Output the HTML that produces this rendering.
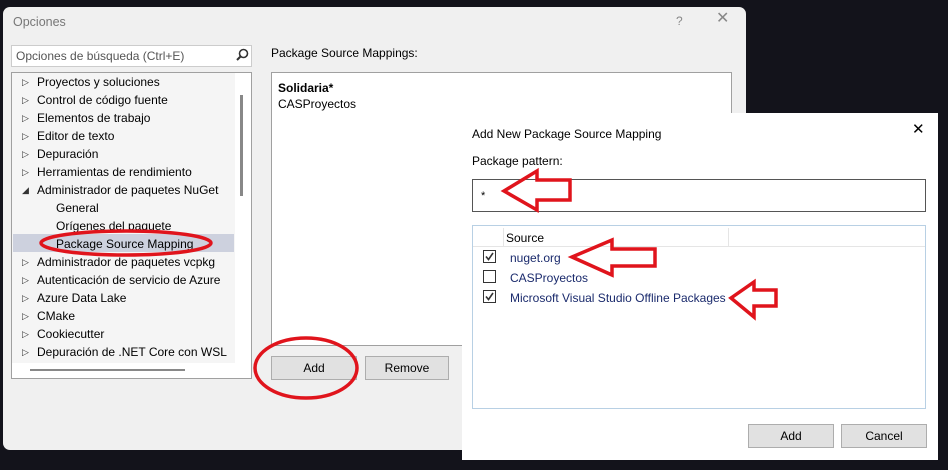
<!DOCTYPE html>
<html><head><meta charset="utf-8"><style>
*{margin:0;padding:0;box-sizing:border-box}
body{width:948px;height:470px;background:#13131b;position:relative;overflow:hidden;font-family:"Liberation Sans",sans-serif;font-size:12px;color:#000}
.a{position:absolute}
.main{left:3px;top:7px;width:743px;height:443px;background:#f0f0f0;border-radius:7px}
.t{white-space:nowrap;line-height:18px}
.btn{position:absolute;background:#e1e1e1;border:1px solid #adadad;text-align:center;line-height:22px}
</style></head><body>
<div class="a main"></div>
<div class="a t" style="left:13px;top:13px;color:#777;font-size:12.5px">Opciones</div>
<div class="a t" style="left:676px;top:12px;color:#888">?</div>
<div class="a t" style="left:716px;top:10px;color:#888;font-size:16px">✕</div>
<div class="a" style="left:11px;top:45px;width:241px;height:22px;background:#fff;border:1px solid #ccc"></div>
<div class="a t" style="left:16px;top:47px;color:#555">Opciones de búsqueda (Ctrl+E)</div>
<svg class="a" style="left:235px;top:48px" width="14" height="14"><circle cx="8.5" cy="5.5" r="4" fill="none" stroke="#333" stroke-width="1.6"/><line x1="6" y1="8" x2="2" y2="12" stroke="#333" stroke-width="2"/></svg>
<div class="a" style="left:11px;top:72px;width:241px;height:307px;background:#fff;border:1px solid #a0a0a0"></div>
<div class="a" style="left:12px;top:73px;width:223px;height:290px;background:#f5f5f5"></div>
<div class="a" style="left:240px;top:95px;width:3px;height:101px;background:#888"></div>
<div class="a" style="left:30px;top:369px;width:155px;height:2px;background:#888"></div>
<div class="a" style="left:13px;top:234px;width:221px;height:18px;background:#cdd1de"></div>
<div class="a" style="left:12px;top:73px">
<div class="a t" style="left:25px;top:0">Proyectos y soluciones</div>
<div class="a t" style="left:25px;top:18px">Control de código fuente</div>
<div class="a t" style="left:25px;top:36px">Elementos de trabajo</div>
<div class="a t" style="left:25px;top:54px">Editor de texto</div>
<div class="a t" style="left:25px;top:72px">Depuración</div>
<div class="a t" style="left:25px;top:90px">Herramientas de rendimiento</div>
<div class="a t" style="left:25px;top:108px">Administrador de paquetes NuGet</div>
<div class="a t" style="left:44px;top:126px">General</div>
<div class="a t" style="left:44px;top:144px">Orígenes del paquete</div>
<div class="a t" style="left:44px;top:162px">Package Source Mapping</div>
<div class="a t" style="left:25px;top:180px">Administrador de paquetes vcpkg</div>
<div class="a t" style="left:25px;top:198px">Autenticación de servicio de Azure</div>
<div class="a t" style="left:25px;top:216px">Azure Data Lake</div>
<div class="a t" style="left:25px;top:234px">CMake</div>
<div class="a t" style="left:25px;top:252px">Cookiecutter</div>
<div class="a t" style="left:25px;top:270px">Depuración de .NET Core con WSL</div>
</div>
<div class="a" style="left:22px;top:73px;font-size:9px;color:#333;line-height:18px">▷<br>▷<br>▷<br>▷<br>▷<br>▷<br>◢<br><br><br><br>▷<br>▷<br>▷<br>▷<br>▷<br>▷</div>
<div class="a t" style="left:271px;top:44px">Package Source Mappings:</div>
<div class="a" style="left:271px;top:72px;width:461px;height:274px;background:#fff;border:1px solid #a0a0a0"></div>
<div class="a t" style="left:278px;top:79px;font-weight:bold">Solidaria*</div>
<div class="a t" style="left:278px;top:95px">CASProyectos</div>
<div class="btn" style="left:271px;top:356px;width:86px;height:24px">Add</div>
<div class="btn" style="left:365px;top:356px;width:84px;height:24px">Remove</div>
<div class="a" style="left:462px;top:113px;width:476px;height:347px;background:#fff"></div>
<div class="a t" style="left:472px;top:125px">Add New Package Source Mapping</div>
<div class="a t" style="left:912px;top:121px;font-size:15px">✕</div>
<div class="a t" style="left:472px;top:152px">Package pattern:</div>
<div class="a" style="left:472px;top:179px;width:454px;height:33px;border:1px solid #555"></div>
<div class="a t" style="left:481px;top:187px;font-size:11px">*</div>
<div class="a" style="left:472px;top:225px;width:454px;height:184px;border:1px solid #b8d0e4"></div>
<div class="a" style="left:503px;top:228px;width:1px;height:19px;background:#e5e5e5"></div>
<div class="a" style="left:728px;top:228px;width:1px;height:19px;background:#e5e5e5"></div>
<div class="a" style="left:473px;top:246px;width:452px;height:1px;background:#e5e5e5"></div>
<div class="a t" style="left:506px;top:229px">Source</div>
<svg class="a" style="left:483px;top:250px" width="14" height="54" fill="none" stroke="#333">
<rect x="0.5" y="0.5" width="12" height="12"/><rect x="0.5" y="20.5" width="12" height="12"/><rect x="0.5" y="40.5" width="12" height="12"/>
<path d="M3 6.5 L5.5 9.5 L10 3" stroke-width="1.6"/><path d="M3 46.5 L5.5 49.5 L10 43" stroke-width="1.6"/>
</svg>
<div class="a t" style="left:510px;top:249px;color:#1a2a6c">nuget.org</div>
<div class="a t" style="left:510px;top:269px;color:#1a2a6c">CASProyectos</div>
<div class="a t" style="left:510px;top:289px;color:#1a2a6c">Microsoft Visual Studio Offline Packages</div>
<div class="btn" style="left:748px;top:424px;width:86px;height:24px">Add</div>
<div class="btn" style="left:841px;top:424px;width:86px;height:24px">Cancel</div>
<svg class="a" style="left:0;top:0" width="948" height="470" fill="none" stroke="#e0141c" stroke-width="3.5">
<ellipse cx="126" cy="243" rx="85" ry="12"/>
<ellipse cx="306" cy="368" rx="51" ry="30"/>
<path d="M504 191 L537 171 L537 180 L570 180 L570 200 L537 200 L537 210 Z"/>
<path d="M572 257 L612 240 L612 249 L655 249 L655 266 L612 266 L612 275 Z"/>
<path d="M731 298 L754 282 L754 290 L776 290 L776 306 L754 306 L754 317 Z"/>
</svg>
</body></html>
